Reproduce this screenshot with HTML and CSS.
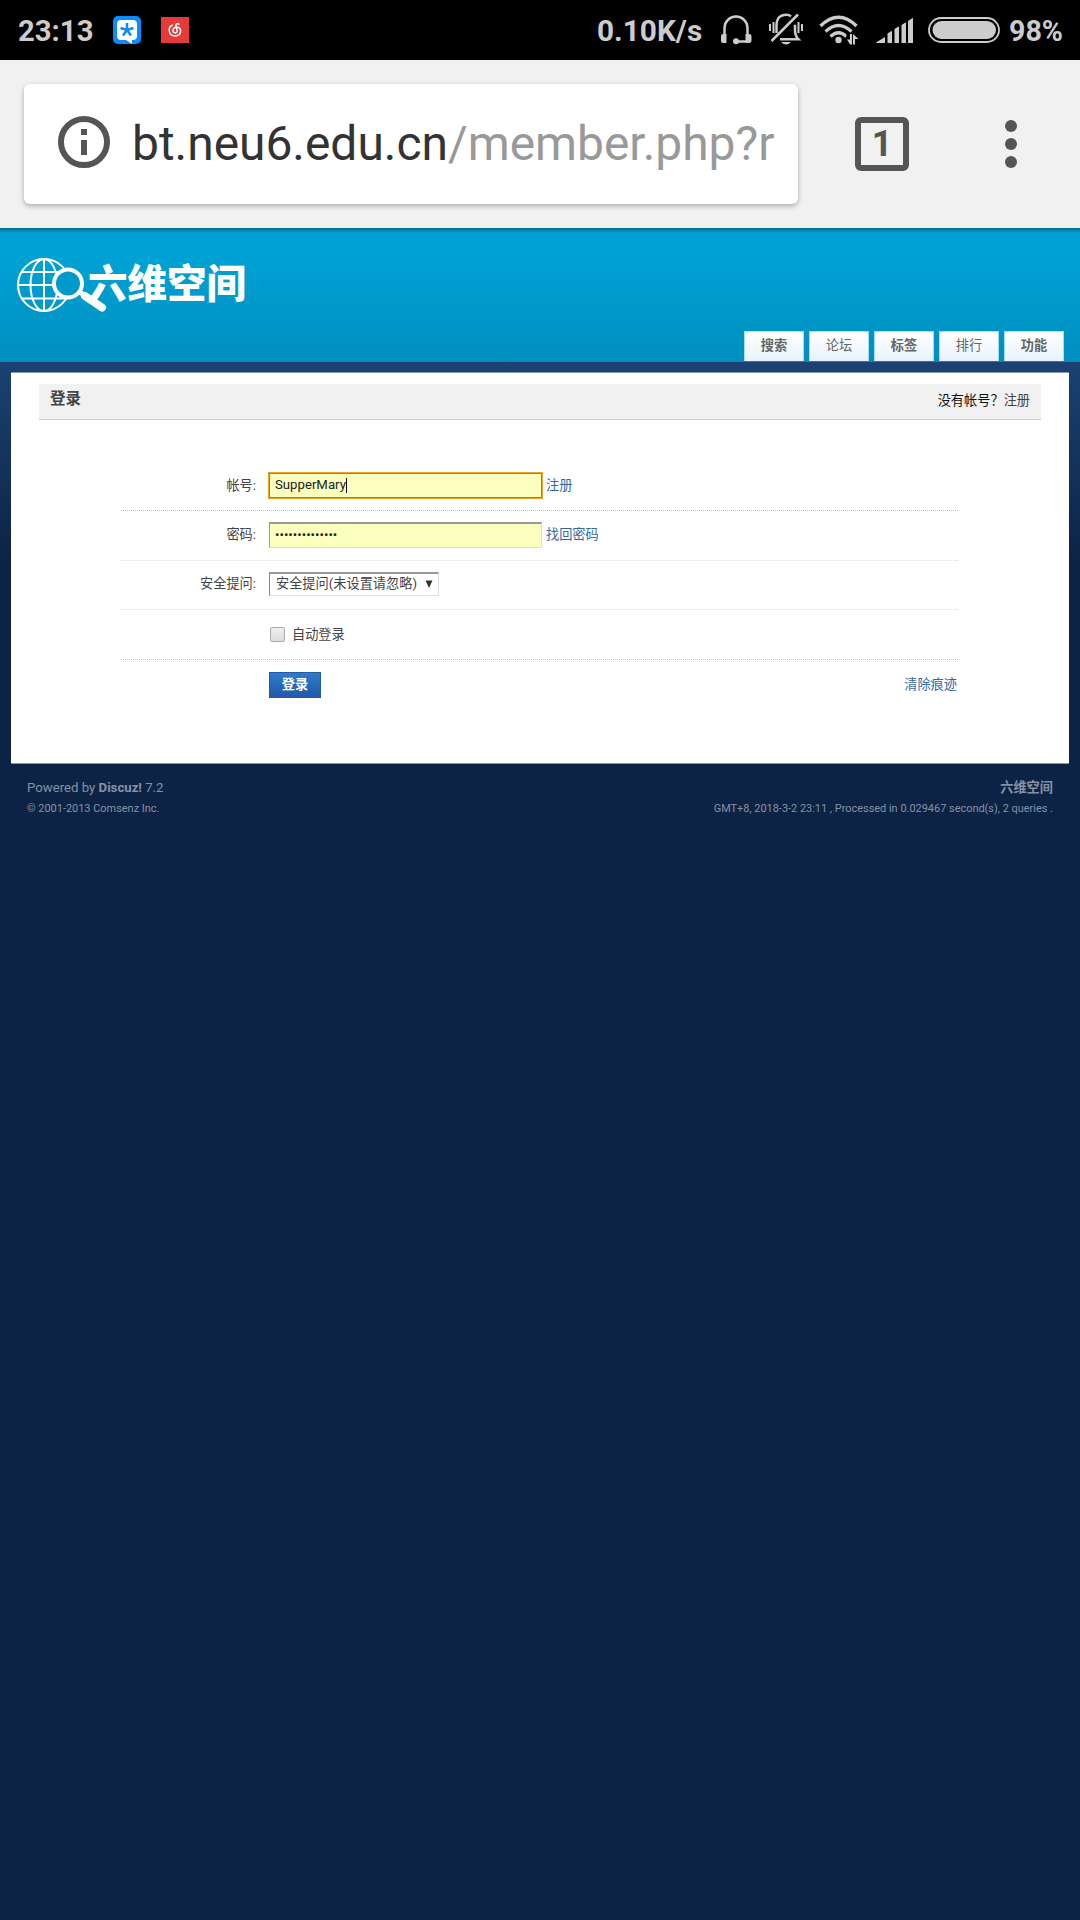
FILE: index.html
```html
<!DOCTYPE html>
<html lang="zh-CN">
<head>
<meta charset="utf-8">
<title>登录 - 六维空间</title>
<link rel="stylesheet" href="styles.css">
</head>
<body>
<div class="status">
  <span class="clock">23:13</span>
  <svg class="app-chat" width="28" height="28" viewBox="0 0 28 28">
    <rect width="28" height="28" rx="5" fill="#0a8cff"/>
    <path d="M8 4h12q4 0 4 4v12q0 4-4 4h-1v4l-6-4H8q-4 0-4-4V8q0-4 4-4z" fill="#fff"/>
    <path d="M14 14V7M14 14l6.500-2M14 14l-6.500-2M14 14l4 5.500M14 14l-4 5.500" stroke="#0a8cff" stroke-width="2.500"/>
  </svg>
  <svg class="app-music" width="28" height="26" viewBox="0 0 28 26">
    <path d="M0 0h28v26H0z" fill="#e53a3a"/>
    <path d="M18.500 7.500c-2-1.500-4-.7-3.600 1.200l1.300 5c.5 3-4.500 3-4.300-.2.200-3 3-4 5.100-3.200 4 1.500 3.500 8.700-2.700 8.700-7.300 0-7.800-9-2.600-11" fill="none" stroke="#fff" stroke-width="1.500"/>
  </svg>
  <span class="speed">0.10K/s</span>
  <svg class="headset" width="32" height="30" viewBox="0 0 32 30">
    <path d="M4.500 20V13a11.500 11.500 0 0 1 23 0v7M28.500 26.500H16" fill="none" stroke="#ccc" stroke-width="2.500"/>
    <path d="M3 19h3.500v9H3q-2 0-2-2v-5q0-2 2-2zM29 19h-3.500v9H29q2.500 0 2.500-2v-5q0-2-2.500-2z" fill="#ccc"/>
    <circle cx="16" cy="26.200" r="3" fill="#ccc"/>
  </svg>
  <svg class="bell" width="36" height="32" viewBox="0 0 36 32">
    <path d="M8.500 20V12q0-7 5-9.300 6-2 9.500 .5M12 26.300h18.500q-3.500-3.500-3.500-9v-5.500" fill="none" stroke="#ccc" stroke-width="2.500"/>
    <path d="M3.500 28L30 1.500" fill="none" stroke="#ccc" stroke-width="2.500"/>
    <path d="M13 29h10q-5 5-10 0z" fill="#ccc"/>
    <path d="M2 11v7M5.500 9v11M30.500 9v11M34 11v7" stroke="#ccc" stroke-width="2"/>
  </svg>
  <svg class="wifi" width="40" height="30" viewBox="0 0 40 30">
    <g fill="none" stroke="#ccc" stroke-width="3.300">
      <path d="M1.500 11q18-17.500 36 0M6.500 16.500q13-12 26 0M11.500 21.500q8-7.500 16 0"/>
    </g>
    <circle cx="19.500" cy="25" r="3.200" fill="#ccc"/>
    <path d="M30 19v10.500" stroke="#000" stroke-width="5"/>
    <path d="M28 24.500h3V19h2v10.500h-2zM34 19v10.500h2V24h3.500z" fill="#ccc"/>
  </svg>
  <svg class="signal" width="37" height="26" viewBox="0 0 37 26">
    <path d="M0 24.500L9 19v6H0zM11.500 15.500l4-2.500q.5 0 .5.500V25h-4.500zM18.500 11l4-2.500q.5 0 .5.500v16h-4.500zM25.500 7l4-2.500q.5 0 .5.500v20h-4.500zM32 3l4.500-3q.5 0 .5.500V25h-5z" fill="#ccc"/>
  </svg>
  <svg class="battery" width="72" height="26" viewBox="0 0 72 26">
    <rect x="1" y="1" width="70" height="24" rx="12" fill="none" stroke="#ccc" stroke-width="1.800"/>
    <rect x="4.500" y="4" width="63.500" height="18" rx="9" fill="#ccc"/>
  </svg>
  <span class="percent">98%</span>
</div>

<div class="toolbar">
  <div class="omnibox">
    <svg width="52" height="52" viewBox="0 0 52 52">
      <circle cx="26" cy="26" r="23" fill="none" stroke="#555" stroke-width="6"/>
      <path d="M23 13h6v6h-6zM23 24h6v15h-6z" fill="#555"/>
    </svg>
    <div class="url"><span class="host">bt.neu6.edu.cn</span>/member.php?r</div>
  </div>
  <div class="tab-count">1</div>
  <svg class="menu" width="12" height="48" viewBox="0 0 12 48">
    <g fill="#555"><circle cx="6" cy="6" r="6"/><circle cx="6" cy="24" r="6"/><circle cx="6" cy="42" r="6"/></g>
  </svg>
</div>

<header class="site-head">
  <div class="logo">
    <svg width="92" height="56" viewBox="0 0 92 56">
      <g fill="none" stroke="#fff" stroke-width="2">
        <circle cx="28" cy="28" r="26"/>
        <ellipse cx="28" cy="28" rx="13.500" ry="26"/>
        <path d="M28 2v52M2 28h52M6 15h43M6 41.500h43"/>
      </g>
      <circle cx="52" cy="26.500" r="14" fill="#0099cb" stroke="#fff" stroke-width="4"/>
      <path d="M63.500 35l7 4.500" stroke="#fff" stroke-width="5"/>
      <path d="M69 39l17 11.500" stroke="#fff" stroke-width="8" stroke-linecap="round"/>
    </svg>
    <span class="logo-name">六维空间</span>
  </div>
  <nav class="tabs">
    <a class="tab strong">搜索</a>
    <a class="tab">论坛</a>
    <a class="tab strong">标签</a>
    <a class="tab">排行</a>
    <a class="tab strong">功能</a>
  </nav>
</header>

<div class="page">
  <main class="panel">
    <div class="panel-head">
      <h1>登录</h1>
      <div class="hint">没有帐号？<a>注册</a></div>
    </div>
    <form class="form">
      <div class="row">
        <label>帐号:</label>
        <div class="field focused"><span>SupperMary</span><i class="caret"></i></div>
        <a class="link">注册</a>
      </div>
      <div class="row faint">
        <label>密码:</label>
        <div class="field"><span class="dots">••••••••••••••</span></div>
        <a class="link">找回密码</a>
      </div>
      <div class="row faint short">
        <label>安全提问:</label>
        <div class="select"><span>安全提问(未设置请忽略)</span><svg width="8" height="8" viewBox="0 0 8 8"><path d="M.5.5h7L4 8z" fill="#333"/></svg></div>
      </div>
      <div class="row">
        <label></label>
        <div class="remember"><i class="checkbox"></i>自动登录</div>
      </div>
      <div class="row last">
        <label></label>
        <div class="submit">登录</div>
        <a class="link clear">清除痕迹</a>
      </div>
    </form>
  </main>
  <footer class="foot">
    <div>
      <p class="main-line">Powered by <b>Discuz!</b> 7.2</p>
      <p class="small-line">© 2001-2013 Comsenz Inc.</p>
    </div>
    <div class="foot-right">
      <p class="main-line site">六维空间</p>
      <p class="small-line">GMT+8, 2018-3-2 23:11 , Processed in 0.029467 second(s), 2 queries .</p>
    </div>
  </footer>
</div>
</body>
</html>
```
FILE: styles.css
```css
* { box-sizing: border-box; }
body {
  margin: 0;
  min-height: 1920px;
  display: flex;
  flex-direction: column;
  background: #0d2345;
  color: #444;
  font: 13.2px/20px Roboto, "Noto Sans CJK SC", sans-serif;
}
svg { display: block; flex: none; }
h1, p { margin: 0; }

.status {
  height: 60px;
  display: flex;
  align-items: center;
  padding: 0 18px;
  background: #000;
  color: #ccc;
  font-size: 29.3px;
  font-weight: 700;
  line-height: 60px;
  white-space: nowrap;
}
.clock { width: 95px; padding-top: 2px; }
.app-music { margin-left: 20px; }
.speed { width: 106px; margin-left: auto; padding-top: 2px; font-size: 29.8px; }
.headset { margin-left: 17px; }
.bell { margin: -2px 0 0 16px; }
.wifi { margin-left: 15px; }
.signal { margin: 2px 0 0 17px; }
.battery { margin-left: 15px; }
.percent { width: 53px; margin-left: 9px; padding-top: 2px; font-size: 28.6px; }

.toolbar {
  height: 168px;
  display: flex;
  align-items: center;
  padding: 0 63px 0 24px;
  background: #f1f1f1;
}
.omnibox {
  width: 774px;
  height: 120px;
  display: flex;
  align-items: center;
  padding: 0 20px 4px 34px;
  border-radius: 6px;
  background: #fff;
  box-shadow: 0 2px 5px rgba(0, 0, 0, .3);
}
.url {
  flex: 1;
  margin-left: 22px;
  padding-top: 4px;
  color: #999;
  font-size: 47.9px;
  line-height: 64px;
  white-space: nowrap;
}
.host { color: #333; }
.tab-count {
  width: 54px;
  height: 54px;
  margin-left: 57px;
  border: 6px solid #555;
  border-radius: 6px;
  color: #555;
  font-size: 36px;
  font-weight: 700;
  line-height: 43px;
  text-align: center;
}
.menu { margin-left: auto; }

.site-head {
  height: 134px;
  display: flex;
  justify-content: space-between;
  padding: 0 16px 0 16px;
  border-bottom: 1px solid #0687bb;
  background:
    linear-gradient(rgba(0, 40, 70, .45), rgba(0, 40, 70, 0)) 0 0 / 100% 5px no-repeat,
    linear-gradient(#00a2d5 20%, #008fc0);
}
.logo { display: flex; padding-top: 29px; }
.logo-name {
  margin: -1px 0 0 -20px;
  color: #fff;
  font-size: 39.5px;
  font-weight: 900;
  line-height: 58px;
}
.tabs { display: flex; align-items: flex-end; gap: 5px; }
.tab {
  width: 60px;
  height: 30px;
  border: 1px solid #a3dfee;
  border-bottom-width: 0;
  background: linear-gradient(#fff, #e8f2fd);
  color: #666;
  line-height: 27px;
  text-align: center;
}
.strong { font-weight: 700; }

.page {
  flex: 1;
  padding: 10px 11px 0;
  background: linear-gradient(#1b4272, #0d2345 200px);
}
.panel {
  height: 392px;
  padding: 11px 28px 0;
  border: solid #8698ad;
  border-width: 1px 0;
  background: #fff;
}
.panel-head {
  height: 36px;
  display: flex;
  justify-content: space-between;
  padding: 0 11px;
  border-bottom: 1px solid #ccc;
  background: #f1f1f1;
}
h1 { padding-top: 1px; font-size: 15.5px; line-height: 29px; }
.hint { color: #111; line-height: 33px; }
.hint a { color: #444; }

.form { width: 837px; margin: 41px 0 0 82px; }
.row {
  height: 50px;
  display: flex;
  align-items: center;
  border-bottom: 1px dotted #bbb;
}
.faint { padding-bottom: 2px; border-color: #ddd; }
.short { height: 49px; }
.last { padding-bottom: 1px; border: 0; }
label { width: 135px; margin-right: 13px; text-align: right; }
.field {
  width: 273px;
  height: 26px;
  display: flex;
  align-items: center;
  padding: 0 5px 1px;
  border: 1px solid #ddd;
  border-top: 2px solid #999;
  border-left-color: #999;
  background: #faffbd;
  color: #222;
}
.focused {
  height: 25px;
  padding-bottom: 1px;
  border: 1px solid #8d8550;
  box-shadow: 0 0 0 1px #e9a62b;
}
.caret { width: 1px; height: 15px; background: #000; }
.dots { font: 13.2px/18px Roboto, sans-serif; }
.link { margin-left: 4px; color: #36699f; }
.select {
  width: 170px;
  height: 24px;
  display: flex;
  align-items: center;
  justify-content: space-between;
  padding: 0 5px 2px 6px;
  border: 1px solid #ddd;
  border-top: 2px solid #999;
  border-left-color: #888;
  white-space: nowrap;
}
.remember { display: flex; align-items: center; padding-left: 1px; }
.checkbox {
  width: 15px;
  height: 15px;
  margin-right: 7px;
  border: 1px solid #aaa;
  border-radius: 2px;
  background: linear-gradient(#eee, #ddd);
}
.submit {
  width: 52px;
  height: 26px;
  border: 1px solid #215ba0;
  background: linear-gradient(#2f7bcb, #2458a8);
  color: #fff;
  font-weight: 700;
  line-height: 23px;
  text-align: center;
}
.clear { margin: 0 1px 0 auto; }

.foot {
  display: flex;
  justify-content: space-between;
  padding: 13px 16px;
  color: #8592a5;
}
.foot-right { text-align: right; }
.main-line { line-height: 21px; }
.site { font-weight: 700; }
.small-line { padding-top: 1px; font-size: 10.95px; }
```
